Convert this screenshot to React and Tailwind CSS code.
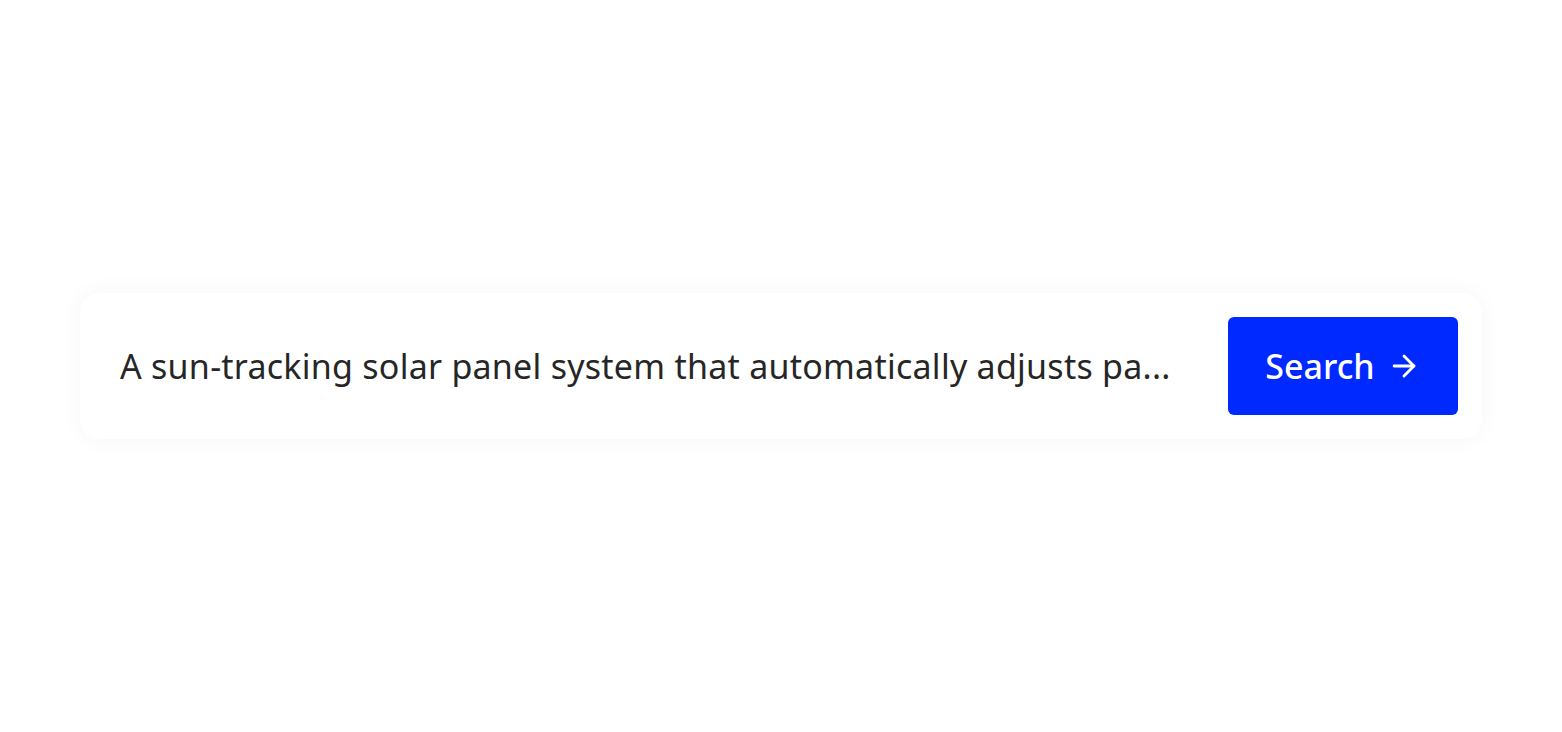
import { ArrowRight } from "lucide-react";

export default function App() {
  return (
    <div className="flex h-[732px] w-full items-center justify-center bg-white font-['Noto_Sans',sans-serif]">
      <div className="flex h-[146px] w-[1402px] items-center justify-between rounded-[20px] bg-white py-6 pl-10 pr-6 shadow-[0_0_24px_rgba(0,0,0,0.04)]">
        <p className="truncate text-[34px] leading-normal tracking-[0.25px] text-[#262626]">
          A sun-tracking solar panel system that automatically adjusts pa...
        </p>
        <button className="flex h-[98px] w-[230px] shrink-0 items-center justify-center gap-3 rounded-md bg-[#0029ff] text-[34px] font-medium text-white">
          Search
          <ArrowRight size={34} strokeWidth={2} />
        </button>
      </div>
    </div>
  );
}
